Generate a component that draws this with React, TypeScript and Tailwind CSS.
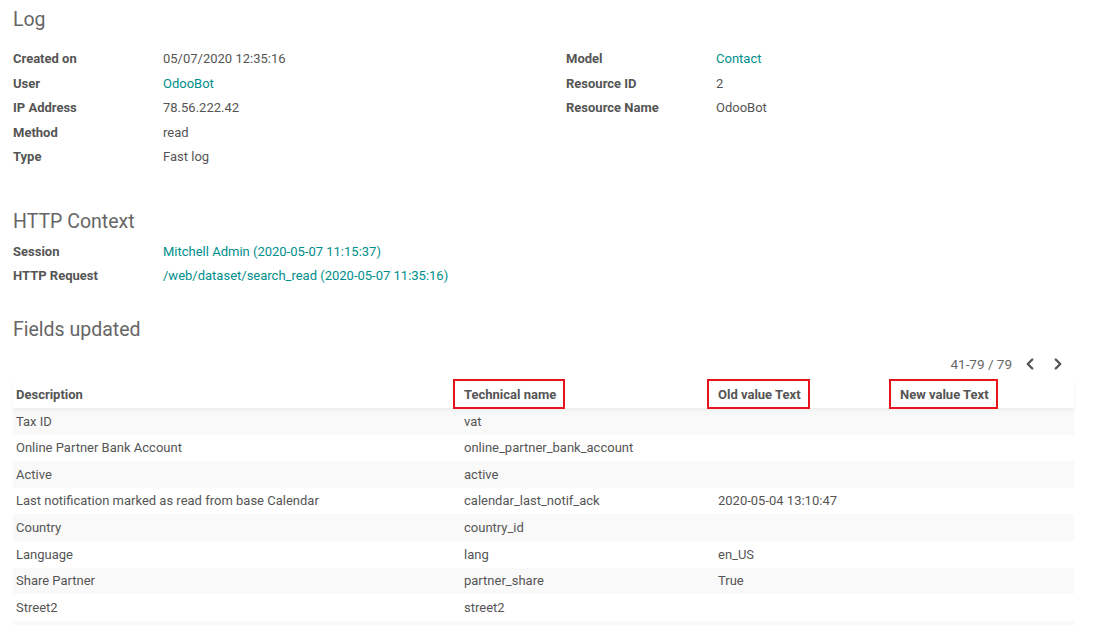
import { ChevronLeft, ChevronRight } from 'lucide-react';

const font = { fontFamily: 'Roboto, "Liberation Sans", sans-serif' };

const logLeft = [
  { label: 'Created on', value: '05/07/2020 12:35:16' },
  { label: 'User', value: 'OdooBot', link: true },
  { label: 'IP Address', value: '78.56.222.42' },
  { label: 'Method', value: 'read' },
  { label: 'Type', value: 'Fast log' },
];

const logRight = [
  { label: 'Model', value: 'Contact', link: true },
  { label: 'Resource ID', value: '2' },
  { label: 'Resource Name', value: 'OdooBot' },
];

const httpRows = [
  { label: 'Session', value: 'Mitchell Admin (2020-05-07 11:15:37)', link: true },
  { label: 'HTTP Request', value: '/web/dataset/search_read (2020-05-07 11:35:16)', link: true },
];

const fields = [
  ['Tax ID', 'vat', '', ''],
  ['Online Partner Bank Account', 'online_partner_bank_account', '', ''],
  ['Active', 'active', '', ''],
  ['Last notification marked as read from base Calendar', 'calendar_last_notif_ack', '2020-05-04 13:10:47', ''],
  ['Country', 'country_id', '', ''],
  ['Language', 'lang', 'en_US', ''],
  ['Share Partner', 'partner_share', 'True', ''],
  ['Street2', 'street2', '', ''],
  ['', '', '', ''],
];

type Row = { label: string; value: string; link?: boolean };

function FieldList({ rows }: { rows: Row[] }) {
  return (
    <div className="flex flex-col">
      {rows.map((r) => (
        <div key={r.label} className="flex h-[24.5px] items-center">
          <span className="w-[150px] shrink-0 font-bold text-[#555]">{r.label}</span>
          <span className={r.link ? 'text-[#008f8c]' : 'text-[#555]'}>{r.value}</span>
        </div>
      ))}
    </div>
  );
}

function Boxed({ children }: { children: string }) {
  return (
    <span className="relative inline-block">
      {children}
      <span className="absolute -left-[11px] -right-[9px] -top-[6px] -bottom-[5px] border-2 border-[#e8141c]" />
    </span>
  );
}

const cols = 'grid grid-cols-[448px_254px_182px_177px]';

export default function App() {
  return (
    <div className="min-h-[625px] bg-white pl-[13px] text-[13px] text-[#555]" style={font}>
      {/* Log */}
      <h2 className="pt-[8px] text-[19.5px] leading-[24px] text-[#666]">Log</h2>
      <div className="mt-[14.5px] flex">
        <div className="w-[553px]">
          <FieldList rows={logLeft} />
        </div>
        <FieldList rows={logRight} />
      </div>

      {/* HTTP Context */}
      <h2 className="mt-[41px] text-[19.5px] leading-[24px] text-[#666]">HTTP Context</h2>
      <div className="mt-[5px]">
        <FieldList rows={httpRows} />
      </div>

      {/* Fields updated */}
      <h2 className="mt-[30px] text-[19.5px] leading-[24px] text-[#666]">Fields updated</h2>

      <div className="mr-[33px] mt-[14px] flex h-[16px] items-center justify-end gap-[2px] text-[13.5px] text-[#666]">
        <span className="mr-[7px]">41-79 / 79</span>
        <ChevronLeft size={18} strokeWidth={3.2} className="text-[#555]" />
        <span className="w-[6px]" />
        <ChevronRight size={18} strokeWidth={3.2} className="text-[#555]" />
      </div>

      <div className="mt-[9px] w-[1061px]">
        <div className={`${cols} relative z-10 h-[27px] items-center font-bold text-[#555] shadow-[0_2px_4px_rgba(0,0,0,0.06)]`}>
          <span className="pl-[3px]">Description</span>
          <span className="pl-[3px]">
            <Boxed>Technical name</Boxed>
          </span>
          <span className="pl-[3px]">
            <Boxed>Old value Text</Boxed>
          </span>
          <span className="pl-[3px]">
            <Boxed>New value Text</Boxed>
          </span>
        </div>
        {fields.map((f, i) => (
          <div
            key={i}
            className={`${cols} h-[26.6px] items-center ${i % 2 === 0 ? 'bg-[#f9f9f9]' : 'bg-white'}`}
          >
            {f.map((c, j) => (
              <span key={j} className="truncate pl-[3px]">
                {c}
              </span>
            ))}
          </div>
        ))}
      </div>
    </div>
  );
}
